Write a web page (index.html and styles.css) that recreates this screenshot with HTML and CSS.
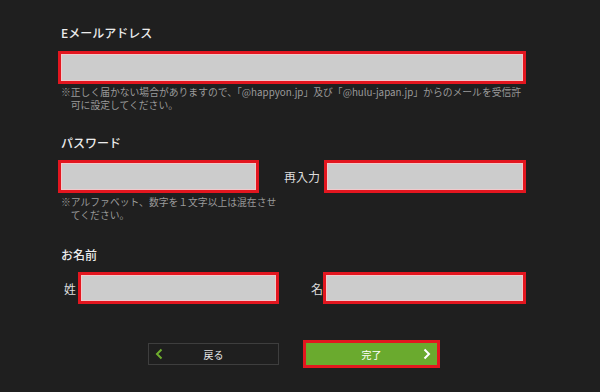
FILE: index.html
```html
<!DOCTYPE html>
<html lang="ja">
<head>
<meta charset="utf-8">
<link rel="stylesheet" href="styles.css">
</head>
<body>
<div class="form">
  <section class="sec sec-email">
    <div class="label">Eメールアドレス</div>
    <div class="field field-wide"></div>
    <p class="note">※正しく届かない場合がありますので、「@happyon.jp」及び「@hulu-japan.jp」からのメールを受信許可に設定してください。</p>
  </section>
  <section class="sec sec-pass">
    <div class="label">パスワード</div>
    <div class="pass-row">
      <div class="pass-col">
        <div class="field field-half"></div>
        <p class="note note-narrow">※アルファベット、数字を１文字以上は混在させてください。</p>
      </div>
      <div class="re-col">
        <span class="side-label">再入力</span>
        <div class="field field-re"></div>
      </div>
    </div>
  </section>
  <section class="sec sec-name">
    <div class="label">お名前</div>
    <div class="name-row">
      <span class="name-label">姓</span>
      <div class="field field-last"></div>
      <span class="name-label name-first-label">名</span>
      <div class="field field-first"></div>
    </div>
  </section>
  <div class="buttons">
    <button class="btn btn-back"><svg class="chev" width="8" height="12" viewBox="0 0 8 12"><path d="M6.5 1.5 L2 6 L6.5 10.5" fill="none" stroke="#6fae2e" stroke-width="2"/></svg><span>戻る</span></button>
    <button class="btn btn-done"><span>完了</span><svg class="chev chev-r" width="8" height="12" viewBox="0 0 8 12"><path d="M1.5 1.5 L6 6 L1.5 10.5" fill="none" stroke="#ffffff" stroke-width="2"/></svg></button>
  </div>
</div>
</body>
</html>
```
FILE: styles.css
```css
html, body {
  margin: 0;
  padding: 0;
  background: #1f1f1f;
  width: 600px;
  height: 392px;
  overflow: hidden;
}
body {
  font-family: "Noto Sans CJK JP", "Noto Sans", sans-serif;
  color: #e6e6e6;
}
.form {
  padding: 25px 0 0 58px;
  width: 468px;
}
.label {
  font-size: 12px;
  line-height: 16px;
  font-weight: 500;
  color: #ececec;
  padding-left: 3px;
}
.field {
  box-sizing: border-box;
  height: 33px;
  background: #cccccc;
  border: 3px solid #e3161f;
  box-shadow: inset 0 0 0 1px #f2c9cb;
}
.sec-email .field { margin-top: 10px; }
.note {
  margin: 2px 0 0 0;
  font-size: 9.8px;
  line-height: 13px;
  color: #9a9a9a;
  padding-left: calc(3px + 1em);
  text-indent: -1em;
}
.sec-pass { margin-top: 23px; }
.pass-row {
  display: flex;
  margin-top: 9px;
}
.pass-col { width: 224px; flex: none; }
.field-half { width: 201px; }
.note-narrow { margin-top: 3px; }
.re-col {
  display: flex;
  align-items: center;
  height: 33px;
  margin-left: 2px;
}
.side-label {
  font-size: 12px;
  color: #dcdcdc;
  width: 40px;
}
.field-re { width: 202px; }
.sec-name { margin-top: 25px; }
.name-row {
  display: flex;
  align-items: center;
  margin-top: 9px;
}
.name-label {
  font-size: 12px;
  color: #dcdcdc;
  width: 20px;
  padding-left: 6px;
  box-sizing: border-box;
}
.field-last { width: 201px; height: 32px; }
.name-first-label {
  margin-left: 32px;
  width: 12px;
  padding-left: 0;
}
.field-first { width: 203px; height: 32px; }
.buttons {
  display: flex;
  align-items: center;
  margin: 36px 0 0 90px;
  gap: 24px;
}
.btn {
  font-family: inherit;
  font-size: 10px;
  position: relative;
  display: flex;
  align-items: center;
  justify-content: center;
  padding: 0;
  box-sizing: border-box;
  cursor: pointer;
}
.btn-back {
  width: 131px;
  height: 22px;
  background: #1f1f1f;
  border: 1px solid #3e3e3e;
  color: #e6e6e6;
}
.btn-done {
  width: 137px;
  height: 28px;
  background: #6aaa2e;
  border: 3px solid #e3161f;
  color: #ffffff;
}
.chev { position: absolute; top: 50%; margin-top: -6px; }
.btn-back .chev { left: 6px; }
.btn-done .chev-r { right: 6px; }
```
